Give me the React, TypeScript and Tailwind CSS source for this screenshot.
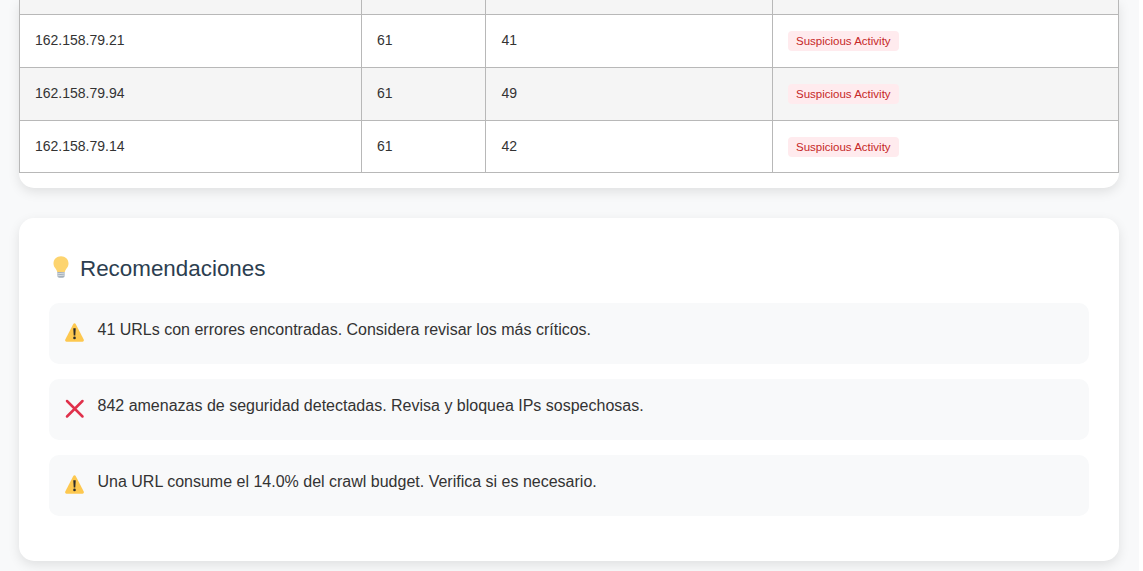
const rows = [
  { ip: "162.158.79.21", hits: 61, urls: 41 },
  { ip: "162.158.79.94", hits: 61, urls: 49 },
  { ip: "162.158.79.14", hits: 61, urls: 42 },
];

function BulbIcon() {
  return (
    <svg width="16" height="22" viewBox="0 0 16 22" className="ml-[4px] mb-[4px] shrink-0">
      <path
        d="M8 .3C3.700.3.500 3.400.500 7.400c0 2.300 1 3.800 2 5.100.9 1.100 1.500 2.200 1.700 3.500h7.600c.2-1.300.8-2.400 1.700-3.500 1-1.300 2-2.800 2-5.100C15.500 3.400 12.300.3 8 .3z"
        fill="#fdd46f"
      />
      <path d="M4.300 16h7.400v3.700c0 1.100-1 2-2 2H6.300c-1 0-2-.9-2-2z" fill="#a5b0bb" />
      <path d="M4.300 17.800l7.400-.7M4.300 19.800l7.400-.7" stroke="#e3e7ea" strokeWidth="0.8" />
    </svg>
  );
}

function WarningIcon() {
  return (
    <svg width="19" height="19" viewBox="0 0 19 19" className="ml-[1px]">
      <path
        d="M9.500 .3c-.5 0-.9.300-1.200.800L.3 16.500c-.5 1 .1 2.200 1.200 2.200h16c1.100 0 1.700-1.200 1.200-2.200L10.700 1.100C10.400.6 10 .3 9.500.3z"
        fill="#fdc84f"
      />
      <path d="M8.300 5.200h2.400l-.4 7.300H8.700z" fill="#2b2b2b" />
      <circle cx="9.500" cy="14.900" r="1.300" fill="#2b2b2b" />
    </svg>
  );
}

function CrossIcon() {
  return (
    <svg width="20" height="20" viewBox="0 0 20 20" className="ml-[1px]">
      <path d="M2 2l15.500 15.500M17.500 2L2 17.500" stroke="#e0314b" strokeWidth="2.500" strokeLinecap="round" />
    </svg>
  );
}

function Recommendation({ icon, text }: { icon: React.ReactNode; text: string }) {
  return (
    <div className="flex h-[61px] rounded-[10px] bg-[#f8f9fa] pl-[15px] pt-[15px]">
      <div className="w-[33.5px] shrink-0 pt-[5px]">{icon}</div>
      <p className="mt-[1px] text-[16px] leading-[22px] text-[#333333]">{text}</p>
    </div>
  );
}

export default function App() {
  return (
    <div className="h-[571px] w-[1143px] overflow-hidden bg-white font-['Liberation_Sans',Arial,sans-serif]">
      <div className="h-[571px] w-[1139px] bg-[#f8f9fa] pl-[19px] pr-[20px]">
        {/* Table card, scrolled so the header is off screen */}
        <div className="h-[188px] overflow-hidden rounded-b-[15px] bg-white shadow-[0_4px_12px_rgba(0,0,0,0.1)]">
          <table className="w-[1100px] table-fixed border-collapse text-[14px] text-[#333333]">
            <colgroup>
              <col className="w-[342px]" />
              <col className="w-[124px]" />
              <col className="w-[287px]" />
              <col />
            </colgroup>
            <tbody>
              <tr className="h-[14px] bg-[#f5f5f5]">
                <td className="border border-t-0 border-[#b8b8b8]" />
                <td className="border border-t-0 border-[#b8b8b8]" />
                <td className="border border-t-0 border-[#b8b8b8]" />
                <td className="border border-t-0 border-[#b8b8b8]" />
              </tr>
              {rows.map((row, i) => (
                <tr key={row.ip} className={i === 2 ? "h-[52px] bg-white" : i === 1 ? "h-[53px] bg-[#f5f5f5]" : "h-[53px] bg-white"}>
                  <td className="border border-[#b8b8b8] px-[15px]">{row.ip}</td>
                  <td className="border border-[#b8b8b8] px-[15px]">{row.hits}</td>
                  <td className="border border-[#b8b8b8] pl-[15.5px] pr-[15px]">{row.urls}</td>
                  <td className="border border-[#b8b8b8] px-[15px]">
                    <span className="inline-block h-[20px] rounded-[4px] bg-[#ffebee] px-[8px] text-[11.5px] leading-[20px] text-[#c62828]">
                      Suspicious Activity
                    </span>
                  </td>
                </tr>
              ))}
            </tbody>
          </table>
        </div>

        {/* Recommendations */}
        <div className="mt-[30px] h-[343px] rounded-[15px] bg-white px-[30px] pt-[35px] shadow-[0_4px_12px_rgba(0,0,0,0.1)]">
          <h2 className="flex h-[30px] items-center gap-[11px] pt-[1px] text-[22.4px] font-normal leading-[30px] text-[#2c3e50]">
            <BulbIcon />
            Recomendaciones
          </h2>
          <div className="mt-[20px] flex flex-col gap-[15px]">
            <Recommendation icon={<WarningIcon />} text="41 URLs con errores encontradas. Considera revisar los más críticos." />
            <Recommendation icon={<CrossIcon />} text="842 amenazas de seguridad detectadas. Revisa y bloquea IPs sospechosas." />
            <Recommendation icon={<WarningIcon />} text="Una URL consume el 14.0% del crawl budget. Verifica si es necesario." />
          </div>
        </div>
      </div>
    </div>
  );
}
